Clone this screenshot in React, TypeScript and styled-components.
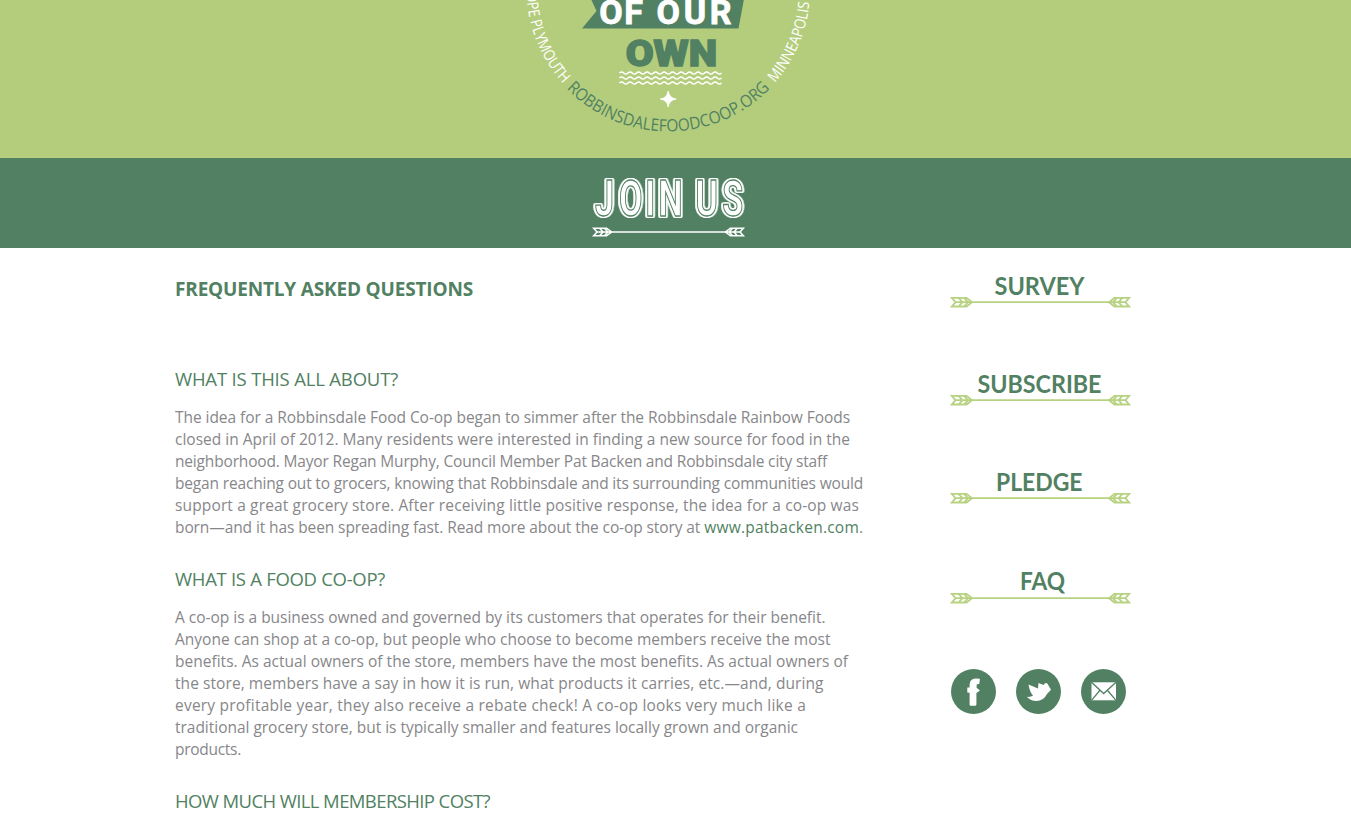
import React from 'react';
import styled, { createGlobalStyle } from 'styled-components';

const colors = {
  lime: '#b4cd7c',
  forest: '#518162',
  text: '#87878a',
  arrow: '#b7d281',
};

const GlobalStyle = createGlobalStyle`
  html, body {
    margin: 0;
    height: 100%;
    overflow: hidden;
    background: #fff;
  }
  body {
    font-family: 'Open Sans', 'Noto Sans', sans-serif;
  }
`;

const Page = styled.div`
  height: 817px;
  overflow: hidden;
  display: flex;
  flex-direction: column;
`;

const Hero = styled.header`
  flex: none;
  height: 158px;
  display: flex;
  justify-content: center;
  background: ${colors.lime};
`;

const Seal = styled.svg`
  flex: none;
  width: 320px;
  height: 158px;
  margin-right: 15px;
`;

const Banner = styled.div`
  flex: none;
  height: 90px;
  display: flex;
  justify-content: center;
  background: ${colors.forest};
`;

const BannerArt = styled.svg`
  flex: none;
  width: 180px;
  height: 90px;
  margin-right: 13px;
`;

const InlineLetters = styled.text`
  font: 700 50px Roboto, sans-serif;
  fill: #fff;
  stroke: ${colors.forest};
  stroke-width: 1.3px;
  filter: drop-shadow(1.5px 0 0 #fff) drop-shadow(-1.5px 0 0 #fff)
    drop-shadow(0 1px 0 #fff) drop-shadow(0 -1px 0 #fff)
    drop-shadow(1px 0.7px 0 #fff);
`;

const Content = styled.main`
  flex: 1;
  display: flex;
  align-items: flex-start;
  gap: 76px;
  padding-left: 175px;
`;

const Article = styled.article`
  width: 700px;
  flex: none;
  color: ${colors.text};
`;

const Title = styled.h1`
  margin: 30px 0 0;
  font-size: 19px;
  line-height: 22px;
  font-weight: 700;
  letter-spacing: -0.172px;
  color: ${colors.forest};
`;

const Question = styled.h2<{ $tracking: number; $top: number }>`
  margin: ${(p) => p.$top}px 0 0;
  font-size: 18.5px;
  line-height: 22px;
  font-weight: 400;
  letter-spacing: ${(p) => p.$tracking}px;
  color: ${colors.forest};
`;

const Answer = styled.p`
  margin: 16px 0 0;
  font-size: 15.5px;
  line-height: 22px;
`;

const Line = styled.span<{ $tracking: number }>`
  display: block;
  white-space: nowrap;
  letter-spacing: ${(p) => p.$tracking}px;
`;

const Link = styled.a`
  color: ${colors.forest};
  text-decoration: none;
  letter-spacing: 0.24px;
`;

const Sidebar = styled.aside`
  width: 180px;
  flex: none;
  display: flex;
  flex-direction: column;
`;

const MenuItem = styled.a<{ $top: number }>`
  display: block;
  height: 40px;
  margin-top: ${(p) => p.$top}px;
`;

const MenuArt = styled.svg`
  display: block;
  overflow: visible;
`;

const MenuLabel = styled.text`
  font: 700 24.5px Lato, sans-serif;
  fill: ${colors.forest};
`;

const Social = styled.nav`
  display: flex;
  gap: 20px;
  margin-top: 61px;
`;

const SocialLink = styled.a`
  display: block;
  width: 45px;
  height: 45px;
`;

const answers: { question: string; tracking: number; top: number; lines: [React.ReactNode, number][] }[] = [
  {
    question: 'WHAT IS THIS ALL ABOUT?',
    tracking: -0.174,
    top: 68,
    lines: [
      ['The idea for a Robbinsdale Food Co-op began to simmer after the Robbinsdale Rainbow Foods', -0.053],
      ['closed in April of 2012. Many residents were interested in finding a new source for food in the', 0.009],
      ['neighborhood. Mayor Regan Murphy, Council Member Pat Backen and Robbinsdale city staff', -0.172],
      ['began reaching out to grocers, knowing that Robbinsdale and its surrounding communities would', -0.169],
      ['support a great grocery store. After receiving little positive response, the idea for a co-op was', 0.141],
      [
        <React.Fragment key="link">
          born—and it has been spreading fast. Read more about the co-op story at <Link>www.patbacken.com</Link>.
        </React.Fragment>,
        -0.1,
      ],
    ],
  },
  {
    question: 'WHAT IS A FOOD CO-OP?',
    tracking: -0.29,
    top: 30,
    lines: [
      ['A co-op is a business owned and governed by its customers that operates for their benefit.', -0.017],
      ['Anyone can shop at a co-op, but people who choose to become members receive the most', 0.016],
      ['benefits. As actual owners of the store, members have the most benefits. As actual owners of', 0.013],
      ['the store, members have a say in how it is run, what products it carries, etc.—and, during', 0.069],
      ['every profitable year, they also receive a rebate check! A co-op looks very much like a', 0.216],
      ['traditional grocery store, but is typically smaller and features locally grown and organic', -0.023],
      ['products.', -0.283],
    ],
  },
  { question: 'HOW MUCH WILL MEMBERSHIP COST?', tracking: -0.6, top: 30, lines: [] },
];

const menu = [
  { label: 'SURVEY', x: 43.5, width: 90, rise: 0, top: 24 },
  { label: 'SUBSCRIBE', x: 26.5, width: 124, rise: 0, top: 58 },
  { label: 'PLEDGE', x: 45, width: 86.5, rise: 0, top: 58 },
  { label: 'FAQ', x: 69, width: 45, rise: 1, top: 60 },
];

const Fletching = () => (
  <path d="M0.8 -4.3H15.5L21 0L15.5 4.3H0.8L4.6 0ZM5 0H21M7.5 -4.3L11.5 0L7.5 4.3M13 -4.3L17 0L13 4.3" />
);

function Arrow({ x, y, width, color, scale = 1 }: { x: number; y: number; width: number; color: string; scale?: number }) {
  return (
    <g transform={`translate(${x} ${y})`} fill="none" stroke={color} strokeWidth={1.8}>
      <path d={`M${20 * scale} 0H${width - 20 * scale}`} strokeWidth={1.7} />
      <g transform={`scale(${scale})`}>
        <Fletching />
      </g>
      <g transform={`translate(${width} 0) scale(${-scale} ${scale})`}>
        <Fletching />
      </g>
    </g>
  );
}

const wave = (y: number) => {
  let d = `M109 ${y}`;
  for (let i = 0; i < 12; i += 1) {
    d += `q2.13 -2.2 4.25 0t4.25 0`;
  }
  return d;
};

// The banner letters are condensed horizontally; positions are given in banner units.
const CONDENSE = 0.68;
const place = (...xs: number[]) => xs.map((x) => x / CONDENSE).join(' ');

function HeroSeal() {
  return (
    <Seal viewBox="508 0 320 158">
      <defs>
        <path id="rim-left" d="M541.5 -75A141.5 141.5 0 0 0 563 83.5" />
        <path id="rim-bottom" d="M566.5 88.5A142 142 0 0 0 771.5 87" />
        <path id="rim-right" d="M775 82.8A142 142 0 0 0 809.5 1" />
      </defs>
      <polygon points="591,-1 596.5,11 582,28.5 738.5,28.5 744,-1" fill={colors.forest} />
      <g fontFamily="Roboto, sans-serif">
        <text x="599.3" y="24.3" fontSize="34" fontWeight="700" fill="#fff" stroke="#fff" strokeWidth="0.8" textLength="43.5">OF</text>
        <text x="656.5" y="24.3" fontSize="34" fontWeight="700" fill="#fff" stroke="#fff" strokeWidth="0.8" textLength="75">OUR</text>
        <text x="625.7" y="65.5" fontSize="37" fontWeight="900" fill={colors.forest} stroke={colors.forest} strokeWidth="1.4" textLength="91.5" lengthAdjust="spacingAndGlyphs">OWN</text>
      </g>
      <g transform="translate(510.5 0)" fill="none" stroke="#fff" strokeWidth="1.5">
        <path d={wave(73)} />
        <path d={wave(78)} />
        <path d={wave(83)} />
      </g>
      <path d="M668.2 91Q669.2 98 676.2 99Q669.2 100 668.2 107Q667.2 100 660.2 99Q667.2 98 668.2 91Z" fill="#fff" stroke="#fff" strokeWidth="0.8" />
      <g fontFamily="'Open Sans', sans-serif" fontSize="15.5">
        <text fill="#fff" textLength="110" lengthAdjust="spacingAndGlyphs" textAnchor="end">
          <textPath href="#rim-left" startOffset="100%">HOPE PLYMOUTH</textPath>
        </text>
        <text fill={colors.forest} fontSize="17" textLength="227" lengthAdjust="spacingAndGlyphs">
          <textPath href="#rim-bottom">ROBBINSDALEFOODCOOP.ORG</textPath>
        </text>
        <text fill="#fff" textLength="89" lengthAdjust="spacingAndGlyphs">
          <textPath href="#rim-right">MINNEAPOLIS</textPath>
        </text>
      </g>
    </Seal>
  );
}

export default function App() {
  return (
    <>
      <GlobalStyle />
      <Page>
        <Hero>
          <HeroSeal />
        </Hero>
        <Banner>
          <BannerArt viewBox="579 158 180 90">
            <g transform={`scale(${CONDENSE} 1)`}>
              <InlineLetters x={place(595, 619, 645.2, 658.5)} y="216">JOIN</InlineLetters>
              <InlineLetters x={place(695.5, 722.3)} y="216">US</InlineLetters>
            </g>
            <Arrow x={593} y={232} width={151} color="#fff" scale={0.88} />
          </BannerArt>
        </Banner>
        <Content>
          <Article>
            <Title>FREQUENTLY ASKED QUESTIONS</Title>
            {answers.map((item) => (
              <section key={item.question}>
                <Question $tracking={item.tracking} $top={item.top}>
                  {item.question}
                </Question>
                {item.lines.length > 0 && (
                  <Answer>
                    {item.lines.map(([text, tracking], i) => (
                      <Line key={i} $tracking={tracking}>
                        {text}
                      </Line>
                    ))}
                  </Answer>
                )}
              </section>
            ))}
          </Article>
          <Sidebar>
            {menu.map((item) => (
              <MenuItem key={item.label} $top={item.top}>
                <MenuArt width="180" height="40">
                  <MenuLabel x={item.x} y={23 - item.rise} textLength={item.width} lengthAdjust="spacingAndGlyphs">
                    {item.label}
                  </MenuLabel>
                  <Arrow x={0} y={30.2} width={179} color={colors.arrow} />
                </MenuArt>
              </MenuItem>
            ))}
            <Social>
              <SocialLink aria-label="Facebook">
                <svg width="45" height="45" viewBox="0 0 45 45">
                  <circle cx="22.5" cy="22.5" r="22.5" fill={colors.forest} />
                  <path d="M28.5 9.8Q29 9.8 28.8 11L28.2 15.2Q26 14.8 25.6 16V18.8L29 21.5L25.4 24V35.5Q25.4 36.8 24 36.8H19.8Q18.6 36.8 18.6 35.5V23.8L16.3 23.4V18.4H18.6V15.5Q18.8 9.6 24.5 9.4Z" fill="#fff" />
                </svg>
              </SocialLink>
              <SocialLink aria-label="Twitter">
                <svg width="45" height="45" viewBox="0 0 45 45">
                  <circle cx="22.5" cy="22.5" r="22.5" fill={colors.forest} />
                  <path d="M12.5 15.5L22 19.5L22.5 14L27.5 16Q29.5 12.8 31.5 14.8L35 20.8L31 25Q27.5 32 20.5 32Q14.5 32 10.7 27.8Q14.5 28.2 17 26.8Q13.5 22.5 12.5 15.5Z" fill="#fff" />
                </svg>
              </SocialLink>
              <SocialLink aria-label="Email">
                <svg width="45" height="45" viewBox="0 0 45 45">
                  <circle cx="22.5" cy="22.5" r="22.5" fill={colors.forest} />
                  <rect x="10.5" y="13.3" width="24.5" height="18" fill="#fff" />
                  <path d="M10.5 13.3L22.7 24.5L35 13.3M10.5 31.3L18.8 21.5M35 31.3L26.6 21.5" fill="none" stroke={colors.forest} strokeWidth="1.3" />
                </svg>
              </SocialLink>
            </Social>
          </Sidebar>
        </Content>
      </Page>
    </>
  );
}
